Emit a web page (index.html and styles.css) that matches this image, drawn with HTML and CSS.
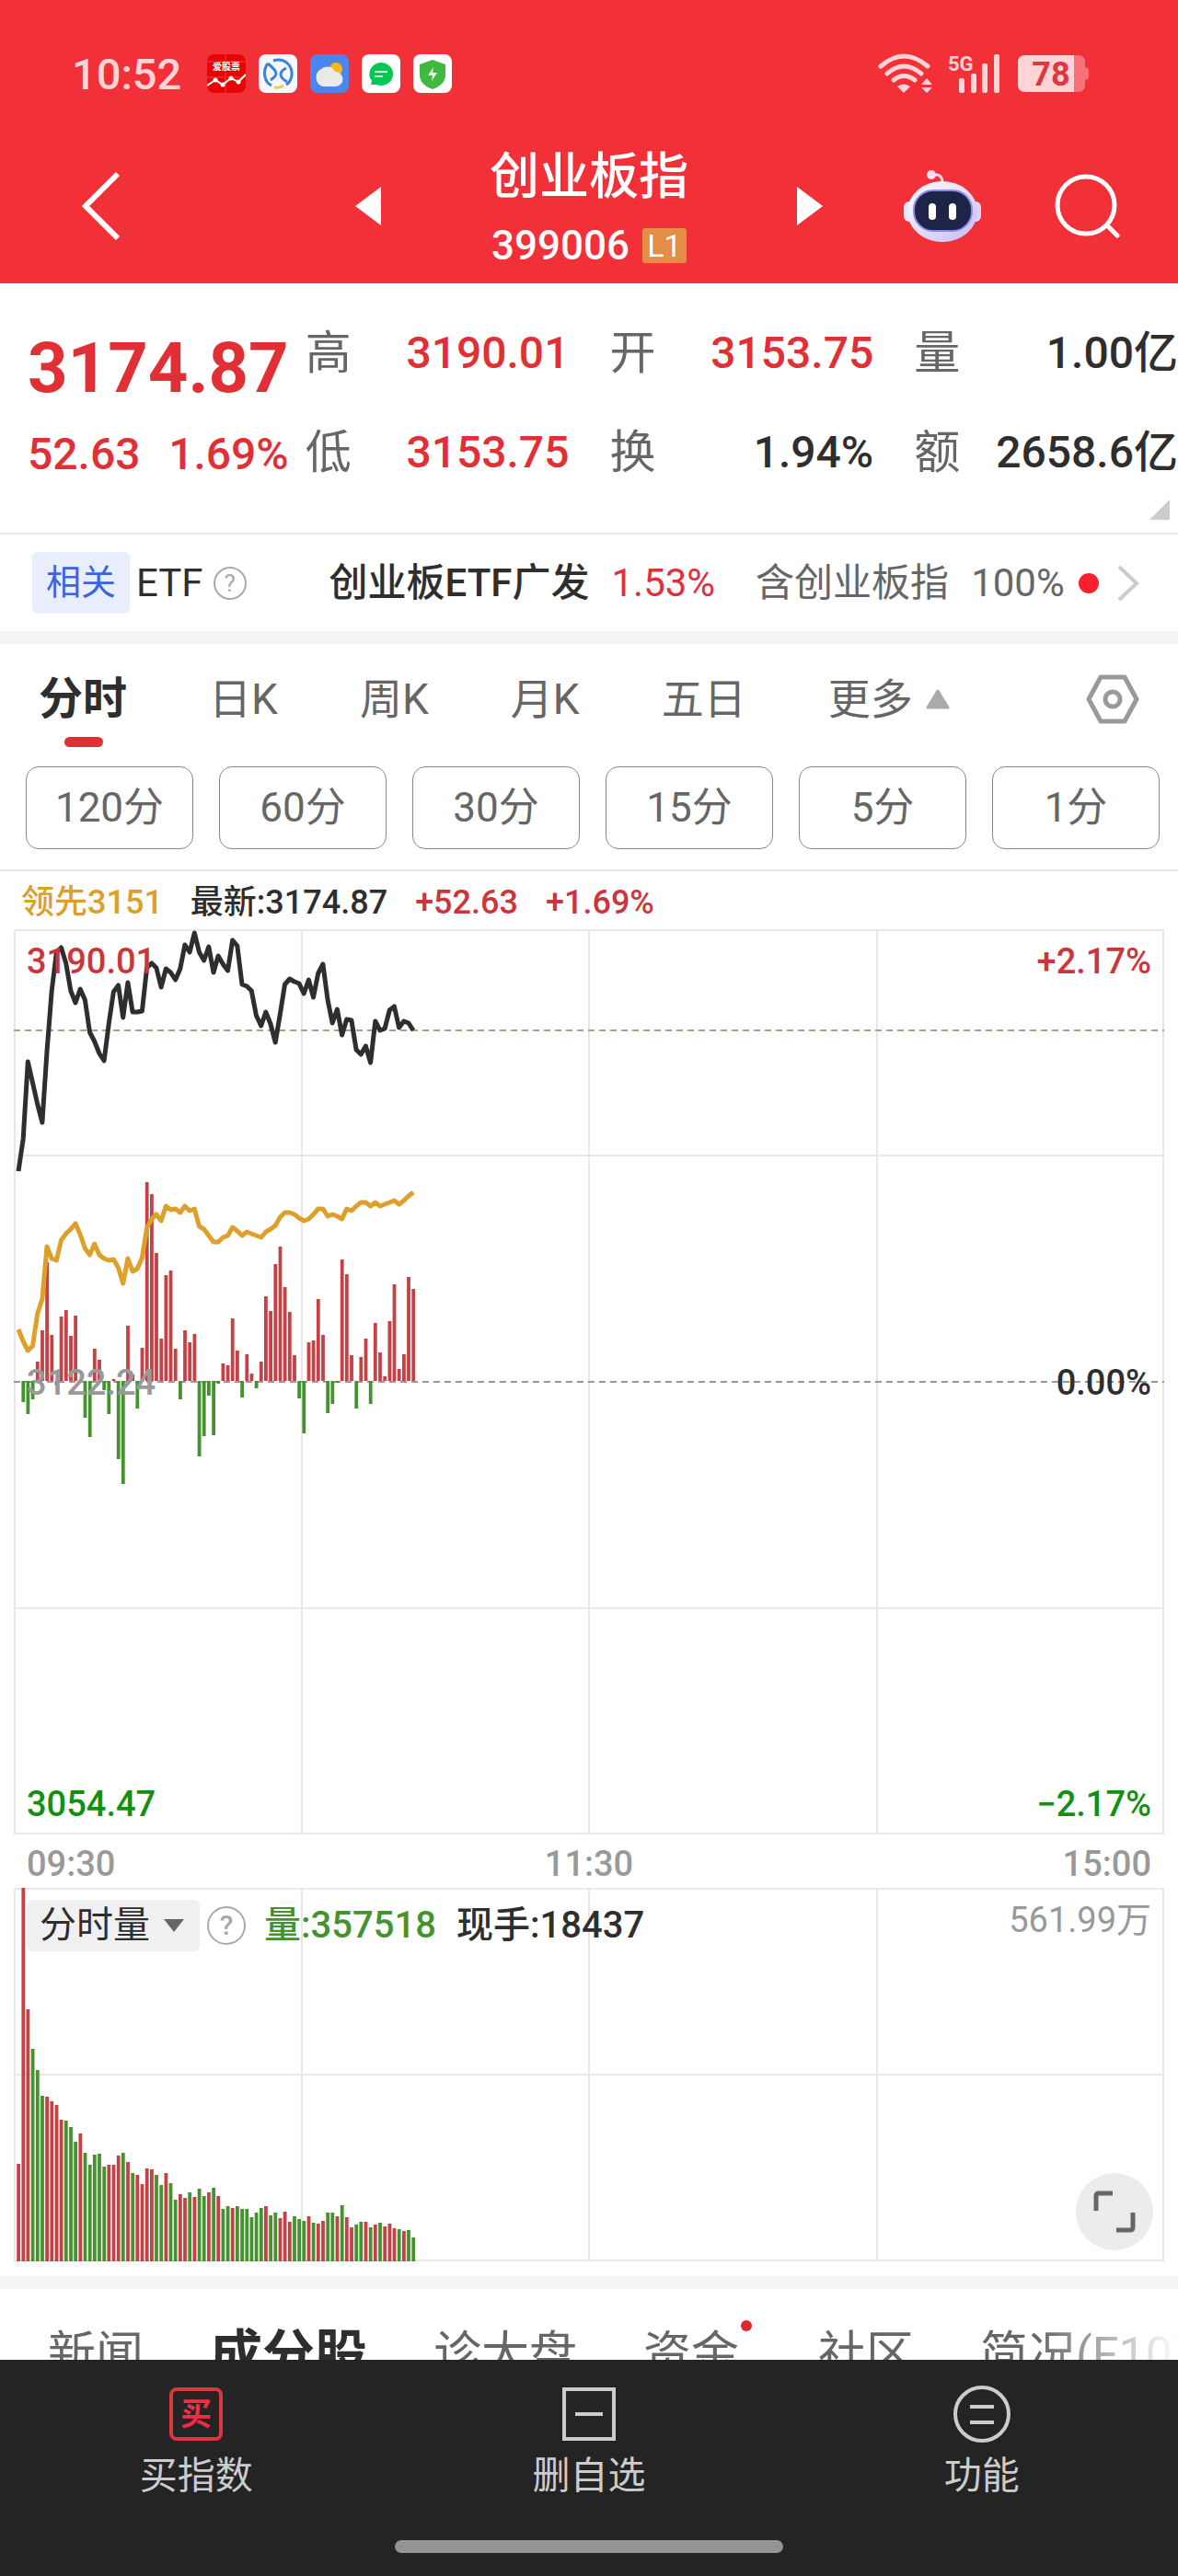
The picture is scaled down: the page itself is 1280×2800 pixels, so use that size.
FILE: index.html
```
<!DOCTYPE html>
<html lang="zh-CN">
<head>
  <meta charset="UTF-8">
  <meta name="viewport" content="width=device-width, initial-scale=1.0">
  <title>创业板指 399006</title>
  <link rel="stylesheet" href="styles.css">
</head>
<body>
  <header class="header">
    <div class="status">
      <span class="time">10:52</span>
      <div class="apps">
        <svg class="app" viewBox="0 0 42 42">
          <rect width="42" height="42" rx="8" fill="#e60505"/>
          <path d="M0 8H42M0 25H42M20 0V42" stroke="#f0403a" stroke-width="1" fill="none"/>
          <text class="app-text" x="21" y="17" text-anchor="middle">爱股票</text>
          <path d="M0 34L9 28L17 33L26 26L34 30L42 22" fill="none" stroke="#fff" stroke-width="2"/>
          <g fill="#fff"><circle cx="9" cy="28" r="2.5"/><circle cx="17" cy="33" r="2.5"/><circle cx="26" cy="26" r="2.5"/><circle cx="34" cy="30" r="2.5"/></g>
        </svg>
        <svg class="app" viewBox="0 0 42 42">
          <rect width="42" height="42" rx="8" fill="#f5f8ff"/>
          <g fill="none" stroke="#3b82d8" stroke-width="3">
            <path d="M16 7C28 3 37 12 36 23C35 29 32 32 30 33"/>
            <path d="M10 10C4 18 6 30 14 34M10 10C15 14 19 18 19 21C19 24 16 26 13 28"/>
            <path d="M30 15C26 17 24 19 24 22C24 26 28 28 31 30"/>
          </g>
          <path d="M17 36C21 37 24 36 27 34" fill="none" stroke="#f6c65a" stroke-width="3"/>
        </svg>
        <svg class="app" viewBox="0 0 42 42">
          <rect width="42" height="42" rx="8" fill="#4a86ee"/>
          <circle cx="28" cy="16" r="7" fill="#fbb81c"/>
          <path d="M14 35a9 10 0 0 1-2-19a9 8 0 0 1 15 3a8 8 0 0 1 1 16z" fill="#e9ebe8"/>
        </svg>
        <svg class="app" viewBox="0 0 42 42">
          <rect width="42" height="42" rx="8" fill="#fff"/>
          <path d="M21 9a13 12.500 0 1 1-5 24l-6 0l1-4A13 12.500 0 0 1 21 9z" fill="#06c755"/>
          <path d="M14 19H28M14 24H23" stroke="#c8f5d8" stroke-width="2"/>
        </svg>
        <svg class="app" viewBox="0 0 42 42">
          <rect width="42" height="42" rx="8" fill="#fff"/>
          <path d="M21 6L35 11V23C35 31 27 36 21 38C15 36 7 31 7 23V11Z" fill="#3fb93f"/>
          <path d="M22 14L16 23H21L20 29L26 20H21Z" fill="#e8ffe8"/>
        </svg>
      </div>
      <div class="signals">
        <svg width="60" height="44" viewBox="0 0 60 44">
          <g fill="none" stroke="#ffd4d6" stroke-width="5" stroke-linecap="round">
            <path d="M3 14Q28 -8 54 14"/>
            <path d="M10 22Q28 6 47 22"/>
            <path d="M17 29Q28 20 40 29"/>
          </g>
          <path d="M28 43L21 36Q28 31 35 36Z" fill="#ffd4d6"/>
          <path d="M53 27L59 34H47ZM53 43L47 37H59Z" fill="#ffd4d6"/>
        </svg>
        <svg width="60" height="44" viewBox="0 0 60 44">
          <text class="net" x="0" y="19">5G</text>
          <g fill="#ffd4d6">
            <rect x="12" y="27" width="6" height="16" rx="2"/>
            <rect x="25" y="22" width="6" height="21" rx="2"/>
            <rect x="37" y="11" width="6" height="32" rx="2"/>
            <rect x="50" y="1" width="6" height="42" rx="2"/>
          </g>
        </svg>
        <svg width="78" height="40" viewBox="0 0 78 40">
          <path d="M60 0H65Q73 0 73 8V13Q77 13 77 17V23Q77 27 73 27V32Q73 40 65 40H60Z" fill="#f87078"/>
          <path d="M8 0H61V40H8Q0 40 0 32V8Q0 0 8 0Z" fill="#ffd4d6"/>
          <text class="battery" x="36" y="33" text-anchor="middle">78</text>
        </svg>
      </div>
    </div>

    <div class="title-bar">
      <button class="back" aria-label="返回">
        <svg width="42" height="76" viewBox="0 0 42 76"><path d="M39 3L4 38L39 73" fill="none" stroke="#fff" stroke-width="6"/></svg>
      </button>
      <div class="title-group">
        <button aria-label="上一个">
          <svg width="28" height="42" viewBox="0 0 28 42"><path d="M28 0V42L0 21Z" fill="#fff"/></svg>
        </button>
        <div class="title">
          <h1>创业板指</h1>
          <div class="code">399006 <span class="level">L1</span></div>
        </div>
        <button aria-label="下一个">
          <svg width="28" height="42" viewBox="0 0 28 42"><path d="M0 0V42L28 21Z" fill="#fff"/></svg>
        </button>
      </div>
      <div class="actions">
        <button aria-label="智能助手">
          <svg width="84" height="78" viewBox="0 0 84 78">
            <defs>
              <linearGradient id="head" x1="0" y1="0" x2="1" y2="1">
                <stop offset="0" stop-color="#fff"/>
                <stop offset="0.500" stop-color="#e3defa"/>
                <stop offset="1" stop-color="#c9b8f2"/>
              </linearGradient>
            </defs>
            <path d="M42 14Q42 3 31 5" fill="none" stroke="#f3d3e6" stroke-width="3"/>
            <circle cx="30" cy="5" r="5" fill="#f5dcf0"/>
            <rect x="0" y="34" width="12" height="22" rx="6" fill="#e6e6fb"/>
            <rect x="72" y="34" width="12" height="22" rx="6" fill="#dcd4f8"/>
            <ellipse cx="42" cy="45" rx="38" ry="33" fill="url(#head)"/>
            <rect x="11" y="22" width="63" height="44" rx="21" fill="#1d2448" stroke="#8f86e8" stroke-width="2"/>
            <rect x="27" y="36" width="8" height="18" rx="4" fill="#fff"/>
            <rect x="49" y="36" width="8" height="18" rx="4" fill="#fff"/>
          </svg>
        </button>
        <button aria-label="搜索">
          <svg width="72" height="72" viewBox="0 0 72 72"><g fill="none" stroke="#fff" stroke-width="5" stroke-linecap="round"><circle cx="34" cy="35" r="31"/><path d="M57 57L68 68"/></g></svg>
        </button>
      </div>
    </div>
  </header>

  <main class="content">
    <section class="quote">
      <div class="price up">
        <div class="last">3174.87</div>
        <div class="change"><span>52.63</span><span>1.69%</span></div>
      </div>
      <dl class="stats">
        <div><dt>高</dt><dd class="up">3190.01</dd></div>
        <div><dt>开</dt><dd class="up">3153.75</dd></div>
        <div><dt>量</dt><dd>1.00亿</dd></div>
        <div><dt>低</dt><dd class="up">3153.75</dd></div>
        <div><dt>换</dt><dd>1.94%</dd></div>
        <div><dt>额</dt><dd>2658.6亿</dd></div>
      </dl>
      <span class="corner"></span>
    </section>

    <section class="etf">
      <span class="tag">相关</span>
      <span class="etf-label">ETF</span>
      <button class="help" aria-label="说明">?</button>
      <span class="etf-name">创业板ETF广发</span>
      <span class="etf-pct">1.53%</span>
      <span class="etf-note">含创业板指</span>
      <span class="etf-share">100%</span>
      <span class="dot"></span>
      <svg class="more" width="24" height="40" viewBox="0 0 24 40"><path d="M2 2L21 20L2 38" fill="none" stroke="#ccc" stroke-width="4"/></svg>
    </section>

    <nav class="tabs">
      <button class="active">分时</button>
      <button>日K</button>
      <button>周K</button>
      <button>月K</button>
      <button>五日</button>
      <button class="tab-more">更多<svg width="26" height="22" viewBox="0 0 26 22"><path d="M13 2L24 20H2Z" fill="#aaa" stroke="#aaa" stroke-width="3" stroke-linejoin="round"/></svg></button>
      <button class="settings" aria-label="设置">
        <svg width="58" height="54" viewBox="0 0 58 54"><g fill="none" stroke="#999" stroke-width="5" stroke-linejoin="round"><path d="M16 3H42L55 27L42 51H16L3 27Z"/><circle cx="29" cy="27" r="8"/></g></svg>
      </button>
    </nav>

    <div class="periods">
      <button>120分</button>
      <button>60分</button>
      <button>30分</button>
      <button>15分</button>
      <button>5分</button>
      <button>1分</button>
    </div>

    <div class="summary">
      <span class="lead">领先3151</span>
      <span>最新:3174.87</span>
      <span class="rise">+52.63</span>
      <span class="rise">+1.69%</span>
    </div>

    <section class="chart">
      <svg id="priceChart" viewBox="0 0 1250 984">
        <path class="grid-line" d="M1 1H1249V983H1V1M313 1V983M625 1V983M938 1V983M1 246H1249M1 738H1249"/>
        <path class="base-line" d="M0 492H1250"/>
        <path class="last-line" d="M0 110H1250"/>
      </svg>
      <div class="scale">
        <div><span class="rise">3190.01</span><span class="rise">+2.17%</span></div>
        <div><span class="mid">3122.24</span><span>0.00%</span></div>
        <div class="fall"><span>3054.47</span><span>−2.17%</span></div>
      </div>
    </section>
    <div class="axis"><span>09:30</span><span>11:30</span><span>15:00</span></div>

    <section class="chart">
      <svg id="volumeChart" viewBox="0 0 1250 406">
        <path class="grid-line" d="M1 1H1249V405H1V1M313 1V405M625 1V405M938 1V405M1 203H1249"/>
      </svg>
      <div class="volume-info">
        <label class="picker">
          <select aria-label="指标">
            <option>分时量</option>
          </select>
        </label>
        <button class="help help-big" aria-label="指标说明">?</button>
        <span class="vol">量:357518</span>
        <span>现手:18437</span>
        <span class="max">561.99万</span>
      </div>
      <button class="full" aria-label="全屏">
        <svg width="46" height="46" viewBox="0 0 46 46"><path d="M3 22V6Q3 3 6 3H21M25 43H40Q43 43 43 40V24" fill="none" stroke="#666" stroke-width="5"/></svg>
      </button>
    </section>

    <div class="divider"></div>
    <nav class="info-tabs">
      <button>新闻</button>
      <button class="active">成分股</button>
      <button>诊大盘</button>
      <button class="has-dot">资金</button>
      <button>社区</button>
      <button>简况(F10)</button>
    </nav>
  </main>

  <footer class="bottom">
    <div class="bottom-nav">
      <button>
        <svg width="62" height="62" viewBox="0 0 62 62"><rect x="4" y="4" width="54" height="54" rx="6" fill="none" stroke="#d9383f" stroke-width="4"/><text class="buy" x="31" y="43" text-anchor="middle">买</text></svg>
        买指数
      </button>
      <button>
        <svg width="62" height="62" viewBox="0 0 62 62"><path d="M4 4H58V58H4ZM16 31H46" fill="none" stroke="#ccc" stroke-width="4"/></svg>
        删自选
      </button>
      <button>
        <svg width="62" height="62" viewBox="0 0 62 62"><g fill="none" stroke="#ccc" stroke-width="4"><circle cx="31" cy="31" r="29"/><path d="M18 23H44M18 40H44"/></g></svg>
        功能
      </button>
    </div>
    <div class="home-bar"></div>
  </footer>

  <script src="chart.js"></script>
</body>
</html>
```
FILE: styles.css
```
* {
  box-sizing: border-box;
}
body {
  margin: 0;
  height: 100vh;
  display: flex;
  flex-direction: column;
  background: #fff;
  color: #2e2e2e;
  font-family: Roboto, "Noto Sans CJK SC", sans-serif;
}
button {
  margin: 0;
  padding: 0;
  border: none;
  background: none;
  color: inherit;
  font: inherit;
  white-space: nowrap;
  cursor: pointer;
}
svg {
  display: block;
}
.up {
  color: #e03035;
}
.rise {
  color: #cb363c;
}
.fall {
  color: #129012;
}

/* header */
.header {
  flex: none;
  background: #f13038;
  color: #fff;
}
.status {
  display: flex;
  align-items: center;
  padding: 52px 96px 0 78px;
  height: 108px;
}
.time {
  color: #ffd4d6;
  font-size: 47px;
  font-weight: 500;
}
.apps {
  display: flex;
  gap: 14px;
  margin-left: 28px;
}
.app {
  width: 42px;
  height: 42px;
}
.app-text {
  fill: #fff;
  font-size: 10px;
  font-weight: 700;
}
.signals {
  display: flex;
  align-items: center;
  gap: 16px;
  margin-left: auto;
}
.net {
  fill: #ffd4d6;
  font-size: 22px;
  font-weight: 700;
}
.battery {
  fill: #dc3840;
  font-size: 36px;
  font-weight: 700;
}
.title-bar {
  display: grid;
  grid-template-columns: 1fr 44% 1fr;
  align-items: center;
  height: 200px;
  padding: 32px 62px 0;
}
.title-group {
  display: flex;
  align-items: center;
  justify-content: space-between;
}
.title {
  padding-top: 8px;
  text-align: center;
}
.title h1 {
  margin: 0 0 14px;
  font-size: 54px;
  line-height: 64px;
  font-weight: 500;
}
.code {
  display: flex;
  align-items: center;
  justify-content: center;
  gap: 14px;
  font-size: 44px;
  line-height: 56px;
  font-weight: 500;
}
.level {
  width: 48px;
  height: 38px;
  border-radius: 3px;
  background: #e38d46;
  font-size: 34px;
  line-height: 38px;
  font-weight: 400;
}
.actions {
  display: flex;
  align-items: center;
  justify-content: flex-end;
  gap: 80px;
}
.back {
  justify-self: start;
  padding-left: 27px;
}

/* quote */
.content {
  flex: 1;
  min-height: 0;
  overflow: hidden;
}
.quote {
  position: relative;
  display: flex;
  height: 273px;
  padding-top: 22px;
  border-bottom: 2px solid #e6e6e6;
}
.price {
  padding: 16px 18px 0 30px;
}
.last {
  font-size: 76px;
  line-height: 108px;
  font-weight: 700;
}
.change {
  display: flex;
  justify-content: space-between;
  font-size: 48px;
  line-height: 80px;
  font-weight: 500;
}
.stats {
  flex: 1;
  display: grid;
  grid-template-columns: repeat(3, 1fr);
  grid-auto-rows: 108px;
  column-gap: 44px;
  margin: 0;
  line-height: 60px;
}
.stats div {
  display: flex;
  align-items: center;
  justify-content: space-between;
}
.stats dt {
  color: #666;
  font-size: 50px;
}
.stats dd {
  margin: 0;
  font-size: 48px;
  font-weight: 500;
}
.corner {
  position: absolute;
  right: 9px;
  bottom: 14px;
  border-left: 22px solid transparent;
  border-bottom: 22px solid #ccc;
}

/* related etf */
.etf {
  display: flex;
  align-items: center;
  height: 119px;
  padding-left: 35px;
  border-bottom: 14px solid #f4f4f4;
  font-size: 42px;
  line-height: 56px;
  white-space: nowrap;
}
.tag {
  padding: 0 15px;
  border-radius: 6px;
  background: #e8eefd;
  color: #3a66dd;
  font-size: 38px;
  line-height: 67px;
}
.etf-label {
  margin: 0 11px 0 7px;
}
.help {
  width: 36px;
  height: 36px;
  border: 2px solid #aaa;
  border-radius: 50%;
  color: #aaa;
  font-size: 26px;
  line-height: 32px;
}
.etf-name {
  margin-left: 90px;
  font-weight: 500;
}
.etf-pct {
  margin-left: 24px;
  color: #e0303e;
}
.etf-note {
  margin-left: 44px;
  color: #666;
}
.etf-share {
  margin-left: 24px;
  color: #666;
}
.dot {
  width: 22px;
  height: 22px;
  margin-left: 15px;
  border-radius: 50%;
  background: #fb2030;
}
.more {
  margin-left: 20px;
}

/* chart tabs */
.tabs {
  display: flex;
  align-items: center;
  gap: 89px;
  height: 119px;
  padding: 0 42px;
  color: #666;
  font-size: 46px;
  line-height: 56px;
}
.tabs .active {
  position: relative;
  color: #2e2e2e;
  font-size: 48px;
  font-weight: 700;
}
.tabs .active::after {
  content: "";
  position: absolute;
  left: 28px;
  bottom: -24px;
  width: 42px;
  height: 11px;
  border-radius: 6px;
  background: #e03035;
}
.tab-more {
  display: flex;
  align-items: center;
  gap: 14px;
}
.settings {
  margin-left: auto;
}
.periods {
  display: grid;
  grid-template-columns: repeat(6, 1fr);
  gap: 28px;
  padding: 14px 20px 22px 28px;
  border-bottom: 2px solid #e6e6e6;
}
.periods button {
  height: 90px;
  border: 1px solid #888;
  border-radius: 14px;
  color: #666;
  font-size: 44px;
  line-height: 56px;
}
.summary {
  display: flex;
  gap: 30px;
  padding: 6px 23px 0;
  font-size: 36px;
  line-height: 57px;
  font-weight: 500;
}
.lead {
  color: #d9a02a;
}

/* charts */
.chart {
  position: relative;
  margin: 0 15px;
}
.grid-line {
  fill: none;
  stroke: #e8e8e8;
  stroke-width: 2;
}
.base-line,
.last-line {
  fill: none;
  stroke: #999;
  stroke-width: 2;
  stroke-dasharray: 7 5;
}
.last-line {
  stroke: #a5a580;
}
.price-line,
.avg-line {
  fill: none;
  stroke: #2e2e2e;
  stroke-width: 5;
  stroke-linejoin: round;
}
.avg-line {
  stroke: #dda02a;
}
.bar-up {
  fill: #c44145;
}
.bar-down {
  fill: #44932f;
}
.scale {
  position: absolute;
  inset: 6px 14px 4px;
  display: flex;
  flex-direction: column;
  justify-content: space-between;
  font-size: 38px;
  line-height: 58px;
  font-weight: 500;
}
.scale div {
  display: flex;
  justify-content: space-between;
}
.mid {
  color: #999;
}
.axis {
  display: flex;
  justify-content: space-between;
  padding: 6px 29px 0;
  color: #999;
  font-size: 38px;
  line-height: 52px;
  font-weight: 500;
}
.volume-info {
  position: absolute;
  inset: 13px 14px auto;
  display: flex;
  align-items: center;
  font-size: 40px;
  line-height: 56px;
  font-weight: 500;
}
.picker {
  position: relative;
}
.picker::after {
  content: "";
  position: absolute;
  right: 17px;
  top: 21px;
  border: 11px solid transparent;
  border-top: 14px solid #666;
  border-bottom: none;
}
.picker select {
  display: block;
  appearance: none;
  width: 188px;
  height: 56px;
  padding: 0 0 0 14px;
  border: none;
  border-radius: 6px;
  background: #f0f0f0;
  color: #2e2e2e;
  font: inherit;
  font-weight: 400;
}
.help-big {
  width: 42px;
  height: 42px;
  margin-left: 8px;
  font-size: 30px;
  line-height: 38px;
}
.vol {
  margin: 0 22px 0 20px;
  color: #44932f;
}
.max {
  align-self: flex-start;
  margin-left: auto;
  color: #999;
  font-size: 38px;
  line-height: 44px;
  font-weight: 400;
}
.full {
  position: absolute;
  right: 12px;
  bottom: 12px;
  width: 84px;
  height: 84px;
  border-radius: 50%;
  background: #ececec;
}
.full svg {
  margin: auto;
}

/* lower tabs */
.divider {
  height: 14px;
  margin-top: 16px;
  background: #f4f4f4;
}
.info-tabs {
  display: flex;
  align-items: center;
  gap: 72px;
  padding: 20px 0 0 52px;
  color: #666;
  font-size: 52px;
  line-height: 104px;
  -webkit-mask-image: linear-gradient(to right, #000 88%, transparent 100%);
  mask-image: linear-gradient(to right, #000 88%, transparent 100%);
}
.info-tabs .active {
  color: #2e2e2e;
  font-size: 57px;
  font-weight: 700;
}
.has-dot {
  position: relative;
  padding-right: 14px;
}
.has-dot::after {
  content: "";
  position: absolute;
  right: 0;
  top: 14px;
  width: 12px;
  height: 12px;
  border-radius: 50%;
  background: #d92b2f;
}

/* bottom bar */
.bottom {
  flex: none;
  background: #242424;
  color: #ccc;
}
.bottom-nav {
  display: grid;
  grid-template-columns: repeat(3, 1fr);
  padding-top: 28px;
}
.bottom-nav button {
  display: flex;
  flex-direction: column;
  align-items: center;
  gap: 6px;
  font-size: 41px;
  line-height: 60px;
}
.buy {
  fill: #f22c44;
  font-size: 34px;
  font-weight: 700;
}
.home-bar {
  width: 33%;
  height: 14px;
  margin: 40px auto 25px;
  border-radius: 7px;
  background: #949494;
}
```
FILE: chart.js
```
// one value per minute from 09:30
const price = [
  263, 228, 144, 167, 190, 210, 133, 67, 25, 20,
  37, 67, 80, 65, 77, 112, 122, 135, 143, 103,
  68, 61, 96, 58, 90, 90, 89, 42, 37, 42,
  63, 43, 47, 55, 43, 17, 25, 4, 25, 34,
  19, 47, 29, 38, 45, 12, 18, 60, 62, 67,
  94, 105, 90, 103, 123, 92, 60, 54, 57, 59,
  70, 55, 74, 48, 38, 77, 102, 87, 115, 98,
  99, 131, 136, 127, 145, 100, 110, 108, 88, 84,
  107, 100, 102, 110
];
const lead = [
  435, 448, 458, 453, 418, 402, 345, 358, 360, 338,
  331, 326, 320, 332, 347, 354, 342, 354, 358, 360,
  359, 368, 385, 358, 372, 369, 357, 325, 315, 310,
  317, 301, 305, 304, 308, 301, 306, 304, 323, 326,
  333, 340, 340, 335, 333, 324, 328, 333, 329, 331,
  333, 335, 329, 326, 322, 313, 308, 308, 310, 314,
  317, 315, 310, 304, 304, 312, 310, 312, 315, 304,
  306, 301, 297, 297, 301, 297, 301, 299, 297, 295,
  299, 295, 290, 286
];
const momentum = [
  0, -23, -36, -20, 21, 55, 129, 50, -5, 70,
  77, 49, 71, 0, -40, -61, 35, 23, -10, -36,
  2, -85, -112, 60, 7, -30, 36, 216, 203, 139,
  46, 115, 120, 35, -20, 55, 42, 51, -82, -60,
  -16, -59, -3, 19, 17, 68, 33, -18, 29, 8,
  -8, 21, 92, 76, 127, 146, 102, 75, 28, -19,
  -57, 42, 44, 89, 50, -35, -25, -2, 132, 116,
  28, -30, 26, 46, -25, 63, 31, 5, 65, 105,
  13, 29, 113, 100
];
// negative = falling minute
const volume = [
  106, 406, 274, -231, -208, -180, 179, 174, 170, 154,
  -153, -146, -130, 139, -118, -105, -116, -117, -103, 105,
  105, 115, -118, 108, -96, 94, 84, 101, 100, -94,
  -83, 96, -85, -67, 73, 69, -75, 70, -79, -71,
  75, -80, 71, -57, -60, 58, -60, -57, -57, -48,
  -53, -58, 60, -50, -53, 47, 54, 43, -49, -46,
  -44, 49, -42, 41, 44, -53, -53, 49, -61, 48,
  37, -40, -43, 43, -37, 40, -42, 38, 41, 36,
  -35, 33, -34, -26
];

const STEP = 5.17;
const START = 5;

function add(svg, tag, attrs) {
  const el = document.createElementNS('http://www.w3.org/2000/svg', tag);
  for (const key in attrs) el.setAttribute(key, attrs[key]);
  svg.appendChild(el);
}

function line(svg, data, cls) {
  const points = data.map((y, i) => `${(START + i * STEP).toFixed(1)},${y}`).join(' ');
  add(svg, 'polyline', { points, class: cls });
}

function bar(svg, i, y, height, up) {
  add(svg, 'rect', {
    x: (START + i * STEP - 1.8).toFixed(1),
    y, height, width: 3.8,
    class: up ? 'bar-up' : 'bar-down'
  });
}

const priceChart = document.getElementById('priceChart');
momentum.forEach((v, i) => bar(priceChart, i, v > 0 ? 491 - v : 491, Math.abs(v), v > 0));
line(priceChart, lead, 'avg-line');
line(priceChart, price, 'price-line');

const volumeChart = document.getElementById('volumeChart');
volume.forEach((v, i) => bar(volumeChart, i, 406 - Math.abs(v), Math.abs(v), v > 0));
```
